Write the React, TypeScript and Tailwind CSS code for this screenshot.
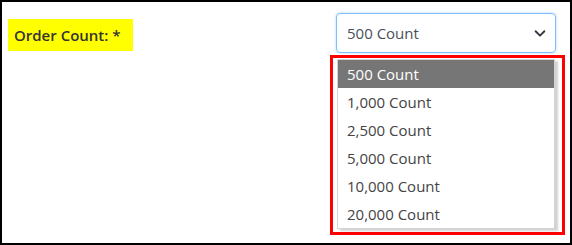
import React from "react";

const items = ["500 Count", "1,000 Count", "2,500 Count", "5,000 Count", "10,000 Count", "20,000 Count"];

export default function App() {
  return (
    <div
      className="relative flex h-[245px] w-[572px] items-start border-2 border-black bg-white text-[#333]"
      style={{ fontFamily: '"Open Sans", "Liberation Sans", sans-serif' }}
    >
      <div className="ml-[6px] mt-[17px] flex h-[32px] w-[125px] items-center bg-[#ffff00] pl-[6px] text-[15px] font-semibold text-[#333]">
        Order Count: *
      </div>
      <div className="ml-auto mr-[14px] mt-[11px] flex h-[40px] w-[220px] items-center justify-between rounded-[4px] border border-[#80bdff] pl-[10px] pr-[8px] text-[15px] text-[#495057] shadow-[0_0_3px_rgba(128,189,255,0.6)]">
        <span>500 Count</span>
        <svg width="14" height="14" viewBox="0 0 16 16" fill="none" stroke="#343a40" strokeWidth="2.2" strokeLinecap="round" strokeLinejoin="round">
          <path d="M3 6l5 5 5-5" />
        </svg>
      </div>
      <div className="absolute left-[328px] top-[53px] h-[180px] w-[235px] border-[3px] border-[#ff0000] pl-[4px] pt-[1px]">
        <div className="w-[218px] border border-[#d4d4d4] bg-white shadow-[3px_2px_2px_rgba(0,0,0,0.18)]">
          {items.map((it, i) => (
            <div
              key={it}
              className={
                i === 0
                  ? "flex h-[28px] items-center bg-[#767676] pl-[9px] text-[15px] text-white"
                  : "flex h-[28px] items-center pl-[9px] text-[15px] text-[#444]"
              }
            >
              {it}
            </div>
          ))}
        </div>
      </div>
    </div>
  );
}
